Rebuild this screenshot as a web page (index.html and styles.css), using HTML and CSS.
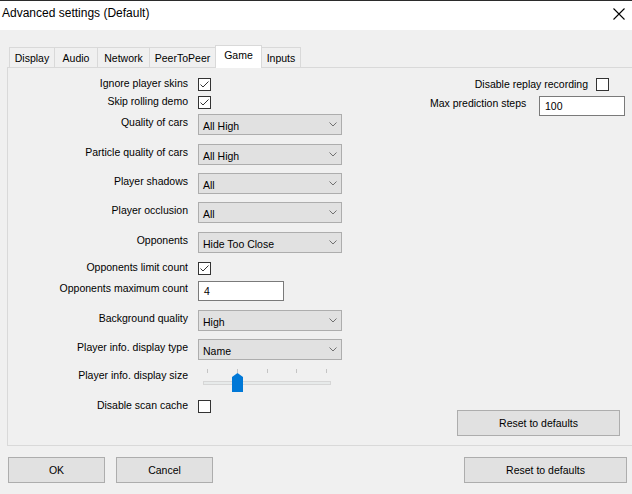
FILE: index.html
```html
<!DOCTYPE html>
<html>
<head>
<meta charset="utf-8">
<title>Advanced settings (Default)</title>
<link rel="stylesheet" href="styles.css">
</head>
<body>
<div class="window">
  <header class="titlebar">
    <span class="title">Advanced settings (Default)</span>
    <svg class="close" width="12" height="12" viewBox="0 0 12 12"><path d="M0.5 0.5L11.5 11.5M11.5 0.5L0.5 11.5" stroke="#000" stroke-width="1.1" fill="none"/></svg>
  </header>

  <nav class="tabs">
    <div class="tab t-display">Display</div>
    <div class="tab t-audio">Audio</div>
    <div class="tab t-network">Network</div>
    <div class="tab t-p2p">PeerToPeer</div>
    <div class="tab t-game active">Game</div>
    <div class="tab t-inputs">Inputs</div>
  </nav>

  <section class="panel">
    <div class="form">
      <span class="lbl lc">Ignore player skins</span>
      <span class="check"><svg width="13" height="13" viewBox="0 0 13 13"><path d="M2.5 6.5L5 9L10.5 3.5" stroke="#333" stroke-width="1" fill="none"/></svg></span>

      <span class="lbl lc">Skip rolling demo</span>
      <span class="check"><svg width="13" height="13" viewBox="0 0 13 13"><path d="M2.5 6.5L5 9L10.5 3.5" stroke="#333" stroke-width="1" fill="none"/></svg></span>

      <span class="lbl">Quality of cars</span>
      <div class="combo"><span>All High</span><svg class="chev" width="8" height="5" viewBox="0 0 8 5"><path d="M0.5 0.5L4 4L7.5 0.5" stroke="#707070" stroke-width="1" fill="none"/></svg></div>

      <span class="lbl">Particle quality of cars</span>
      <div class="combo"><span>All High</span><svg class="chev" width="8" height="5" viewBox="0 0 8 5"><path d="M0.5 0.5L4 4L7.5 0.5" stroke="#707070" stroke-width="1" fill="none"/></svg></div>

      <span class="lbl">Player shadows</span>
      <div class="combo"><span>All</span><svg class="chev" width="8" height="5" viewBox="0 0 8 5"><path d="M0.5 0.5L4 4L7.5 0.5" stroke="#707070" stroke-width="1" fill="none"/></svg></div>

      <span class="lbl">Player occlusion</span>
      <div class="combo"><span>All</span><svg class="chev" width="8" height="5" viewBox="0 0 8 5"><path d="M0.5 0.5L4 4L7.5 0.5" stroke="#707070" stroke-width="1" fill="none"/></svg></div>

      <span class="lbl">Opponents</span>
      <div class="combo"><span>Hide Too Close</span><svg class="chev" width="8" height="5" viewBox="0 0 8 5"><path d="M0.5 0.5L4 4L7.5 0.5" stroke="#707070" stroke-width="1" fill="none"/></svg></div>

      <span class="lbl lc">Opponents limit count</span>
      <span class="check"><svg width="13" height="13" viewBox="0 0 13 13"><path d="M2.5 6.5L5 9L10.5 3.5" stroke="#333" stroke-width="1" fill="none"/></svg></span>

      <span class="lbl li">Opponents maximum count</span>
      <div class="input">4</div>

      <span class="lbl">Background quality</span>
      <div class="combo"><span>High</span><svg class="chev" width="8" height="5" viewBox="0 0 8 5"><path d="M0.5 0.5L4 4L7.5 0.5" stroke="#707070" stroke-width="1" fill="none"/></svg></div>

      <span class="lbl">Player info. display type</span>
      <div class="combo"><span>Name</span><svg class="chev" width="8" height="5" viewBox="0 0 8 5"><path d="M0.5 0.5L4 4L7.5 0.5" stroke="#707070" stroke-width="1" fill="none"/></svg></div>

      <span class="lbl">Player info. display size</span>
      <svg class="slider" width="144" height="26" viewBox="0 0 144 26">
        <g stroke="#c4c4c4" stroke-width="1">
          <line x1="9.5" y1="2" x2="9.5" y2="6"/>
          <line x1="39.5" y1="2" x2="39.5" y2="6"/>
          <line x1="69.5" y1="2" x2="69.5" y2="6"/>
          <line x1="98.5" y1="2" x2="98.5" y2="6"/>
          <line x1="128.5" y1="2" x2="128.5" y2="6"/>
        </g>
        <rect x="5.5" y="14.5" width="127" height="3" fill="#e7eaea" stroke="#d6d6d6"/>
        <polygon points="34,10 39.5,6 45,10 45,25 34,25" fill="#0078d7"/>
      </svg>

      <span class="lbl lc">Disable scan cache</span>
      <span class="check"></span>
    </div>

    <div class="side">
      <div class="side-row">
        <span class="side-lbl">Disable replay recording</span>
        <span class="check"></span>
      </div>
      <div class="side-row2">
        <span class="side-lbl2">Max prediction steps</span>
        <div class="input small">100</div>
      </div>
      <button class="btn reset-in">Reset to defaults</button>
    </div>
  </section>

  <footer class="footer">
    <button class="btn ok">OK</button>
    <button class="btn cancel">Cancel</button>
    <button class="btn reset">Reset to defaults</button>
  </footer>
</div>
</body>
</html>
```

FILE: styles.css
```css
* { box-sizing: border-box; }

html, body {
  margin: 0;
  padding: 0;
}

body {
  width: 632px;
  height: 494px;
  overflow: hidden;
  background: #f0f0f0;
  font-family: "Liberation Sans", Arial, sans-serif;
  font-size: 10.5px;
  color: #000;
}

.window {
  width: 632px;
  height: 494px;
  overflow: hidden;
}

/* Title bar */
.titlebar {
  height: 30px;
  background: #fff;
  border-top: 1px solid #2b2b2b;
  display: flex;
  align-items: flex-start;
  justify-content: space-between;
  padding: 4px 7px 0 2px;
}

.title {
  font-size: 12px;
  line-height: 16px;
}

.close {
  margin-top: 3px;
}

/* Tabs */
.tabs {
  display: flex;
  align-items: flex-end;
  height: 22px;
  margin: 15px 0 0 9px;
}

.tab {
  height: 20px;
  border: 1px solid #d9d9d9;
  border-bottom: none;
  background: #f0f0f0;
  margin-right: -1px;
  text-align: center;
  line-height: 19px;
  padding-top: 1px;
}

.t-display { width: 46px; }
.t-audio { width: 44px; }
.t-network { width: 53px; }
.t-p2p { width: 67px; }
.t-game { width: 47px; }
.t-inputs { width: 40px; }

.tab.active {
  height: 23px;
  margin-bottom: -1px;
  background: #fff;
  position: relative;
  z-index: 1;
  line-height: 19px;
  padding-top: 0;
}

/* Panel */
.panel {
  margin-left: 7px;
  width: 640px;
  height: 379px;
  border: 1px solid #d9d9d9;
  display: flex;
}

.form {
  display: grid;
  grid-template-columns: 180px auto;
  grid-template-rows: 18px 18px 30px 29px 29px 30px 30px 19px 29px 29px 28px 33px 14px;
  column-gap: 10px;
  align-items: start;
  padding-top: 10px;
  width: 334px;
}

.lbl {
  text-align: right;
  white-space: nowrap;
  line-height: 16px;
}

.lbl.lc { line-height: 11px; }
.lbl.li { line-height: 15px; }

.check {
  display: block;
  width: 13px;
  height: 13px;
  border: 1px solid #333;
  background: #fff;
  position: relative;
}

.check svg {
  display: block;
  margin: -1px 0 0 -1px;
}

.combo {
  width: 144px;
  height: 21px;
  border: 1px solid #adadad;
  background: #e1e1e1;
  display: flex;
  align-items: center;
  justify-content: space-between;
  padding: 2px 4px 0 4px;
  white-space: nowrap;
}

.chev {
  display: block;
  margin-top: -2px;
}

.input {
  width: 86px;
  height: 20px;
  border: 1px solid #7a7a7a;
  background: #fff;
  padding-left: 5px;
  line-height: 18px;
}

.slider {
  display: block;
}

/* Right side */
.side {
  margin-left: 88px;
  width: 196px;
  display: flex;
  flex-direction: column;
  padding: 10px 0 9px 0;
}

.side-row {
  display: flex;
  justify-content: flex-end;
  align-items: flex-start;
  gap: 8px;
  padding-right: 17px;
}

.side-lbl {
  line-height: 13px;
  white-space: nowrap;
}

.side-row2 {
  display: flex;
  align-items: flex-start;
  margin-top: 5px;
}

.side-lbl2 {
  flex: 1;
  line-height: 14px;
  white-space: nowrap;
}

.input.small {
  margin-right: 1px;
}

/* Buttons */
.btn {
  font-family: "Liberation Sans", Arial, sans-serif;
  font-size: 10.5px;
  color: #000;
  height: 26px;
  border: 1px solid #adadad;
  background: #e1e1e1;
  padding: 0;
  margin: 0;
  text-align: center;
}

.reset-in {
  width: 163px;
  margin-top: auto;
  align-self: flex-end;
  margin-right: 6px;
}

.footer {
  display: flex;
  margin-top: 11px;
  padding: 0 5px 0 8px;
}

.ok, .cancel { width: 97px; }
.cancel { margin-left: 11px; }
.reset { width: 163px; margin-left: auto; }
```
